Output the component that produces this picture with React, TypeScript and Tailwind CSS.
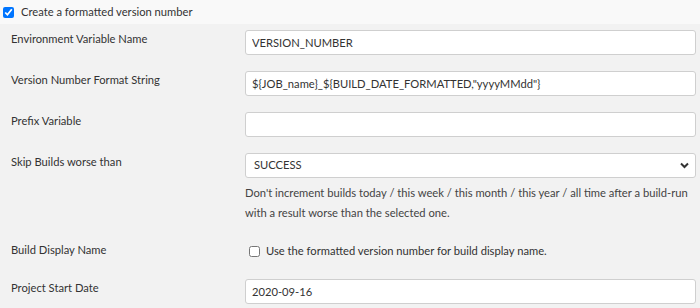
import React from 'react';

const font = { fontFamily: '"Segoe UI", Lato, sans-serif' };

const Row: React.FC<{ label: string; children: React.ReactNode; className?: string }> = ({ label, children, className }) => (
  <div className={`flex ${className ?? ''}`}>
    <div className="w-[245px] shrink-0 pl-[11px] pt-[1px] leading-[16px]">{label}</div>
    <div className="flex-1 pr-[4px]">{children}</div>
  </div>
);

const TextBox: React.FC<{ value: string }> = ({ value }) => (
  <input
    readOnly
    value={value}
    className="block w-full h-[25px] px-[6px] bg-white border border-[#cfcfcf] rounded-[3px] text-[11.2px] text-[#333] outline-none"
    style={font}
  />
);

export default function App() {
  return (
    <div className="w-[700px] h-[308px] overflow-hidden bg-[#f2f2f2] text-[11.2px] text-[#333]" style={font}>
      {/* Enable row */}
      <div className="h-[24px] bg-[#f9f9f9] flex items-center pl-[3px] gap-[7px]">
        <input type="checkbox" defaultChecked className="w-[11px] h-[11px] m-0 accent-[#0075ff]" />
        <span>Create a formatted version number</span>
      </div>

      <div className="pt-[6px]">
        <Row label="Environment Variable Name" className="mb-[16px]">
          <TextBox value="VERSION_NUMBER" />
        </Row>
        <Row label="Version Number Format String" className="mb-[16px]">
          <TextBox value={'${JOB_name}_${BUILD_DATE_FORMATTED,"yyyyMMdd"}'} />
        </Row>
        <Row label="Prefix Variable" className="mb-[16px]">
          <TextBox value="" />
        </Row>
        <Row label="Skip Builds worse than">
          <div className="relative">
            <select
              defaultValue="SUCCESS"
              className="block w-full h-[25px] pl-[8px] bg-white border border-[#cfcfcf] rounded-[3px] text-[11.2px] text-[#333] appearance-none outline-none"
              style={font}
            >
              <option>SUCCESS</option>
              <option>UNSTABLE</option>
              <option>FAILURE</option>
              <option>NOT_BUILT</option>
              <option>ABORTED</option>
            </select>
            <svg className="absolute right-[7px] top-[9px] pointer-events-none" width="9" height="7" viewBox="0 0 9 7">
              <path d="M1 1.5 L4.5 5 L8 1.5" fill="none" stroke="#333" strokeWidth="2" />
            </svg>
          </div>
          <div className="mt-[5px] leading-[20px] text-[#444]">
            Don't increment builds today / this week / this month / this year / all time after a build-run with a result worse than the selected one.
          </div>
        </Row>
        <Row label="Build Display Name" className="mt-[18px] mb-[19px]">
          <label className="flex items-center gap-[6px] pl-[4px] pt-[2px]">
            <input type="checkbox" className="w-[11px] h-[11px] m-0" />
            <span>Use the formatted version number for build display name.</span>
          </label>
        </Row>
        <Row label="Project Start Date">
          <TextBox value="2020-09-16" />
        </Row>
      </div>
    </div>
  );
}
